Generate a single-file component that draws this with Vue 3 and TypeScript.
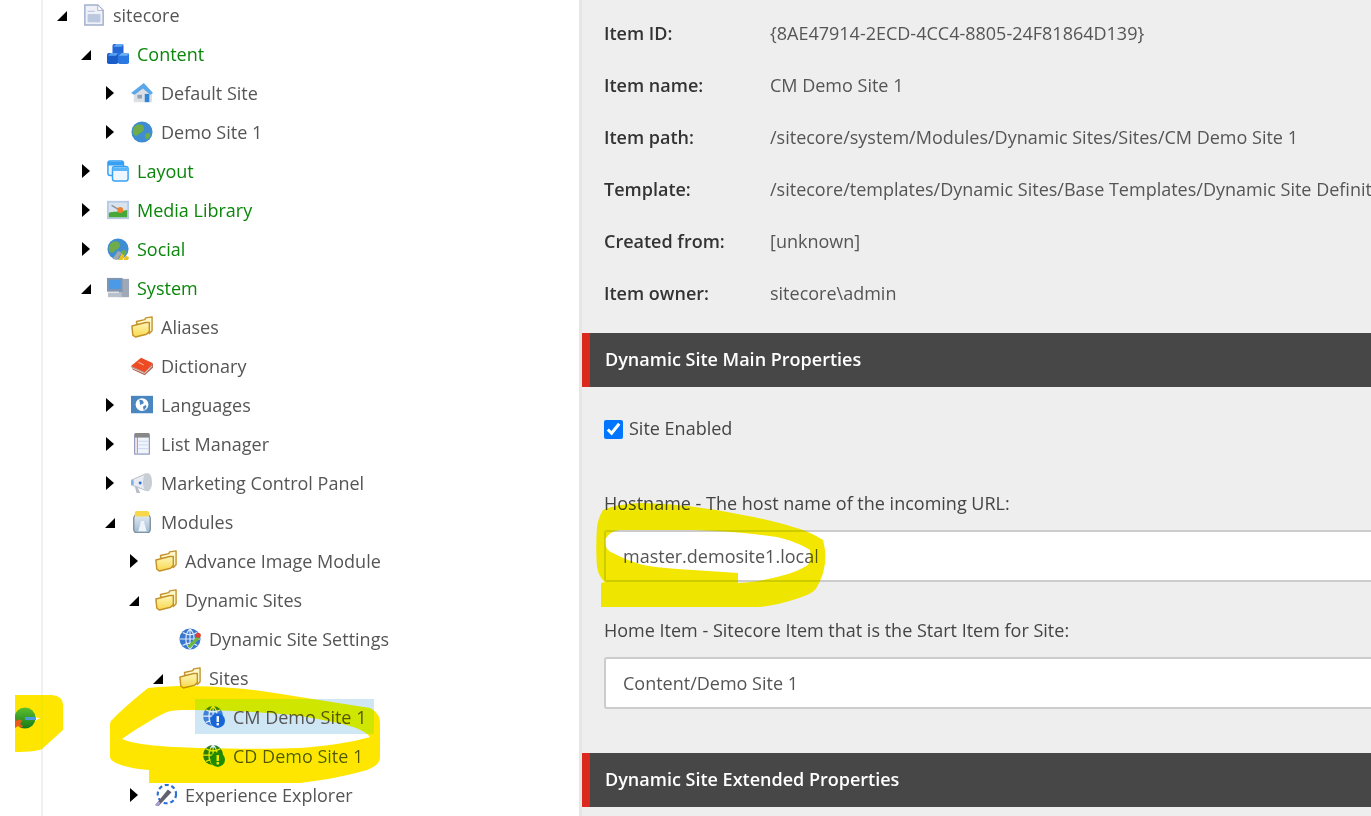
<script setup lang="ts">
interface Row { label: string; depth: number; arrow: '' | 'open' | 'closed'; icon: string; green?: boolean; selected?: boolean }
const rows: Row[] = [
  { label: 'sitecore', depth: 0, arrow: 'open', icon: 'page' },
  { label: 'Content', depth: 1, arrow: 'open', icon: 'cubes', green: true },
  { label: 'Default Site', depth: 2, arrow: 'closed', icon: 'home' },
  { label: 'Demo Site 1', depth: 2, arrow: 'closed', icon: 'globe' },
  { label: 'Layout', depth: 1, arrow: 'closed', icon: 'windows', green: true },
  { label: 'Media Library', depth: 1, arrow: 'closed', icon: 'picture', green: true },
  { label: 'Social', depth: 1, arrow: 'closed', icon: 'social', green: true },
  { label: 'System', depth: 1, arrow: 'open', icon: 'computer', green: true },
  { label: 'Aliases', depth: 2, arrow: '', icon: 'folder' },
  { label: 'Dictionary', depth: 2, arrow: '', icon: 'book' },
  { label: 'Languages', depth: 2, arrow: 'closed', icon: 'lang' },
  { label: 'List Manager', depth: 2, arrow: 'closed', icon: 'list' },
  { label: 'Marketing Control Panel', depth: 2, arrow: 'closed', icon: 'mega' },
  { label: 'Modules', depth: 2, arrow: 'open', icon: 'jar' },
  { label: 'Advance Image Module', depth: 3, arrow: 'closed', icon: 'folder' },
  { label: 'Dynamic Sites', depth: 3, arrow: 'open', icon: 'folder' },
  { label: 'Dynamic Site Settings', depth: 4, arrow: '', icon: 'settings' },
  { label: 'Sites', depth: 4, arrow: 'open', icon: 'folder' },
  { label: 'CM Demo Site 1', depth: 5, arrow: '', icon: 'siteBlue', selected: true },
  { label: 'CD Demo Site 1', depth: 5, arrow: '', icon: 'siteGreen' },
  { label: 'Experience Explorer', depth: 3, arrow: 'closed', icon: 'explorer' },
]
const info = [
  ['Item ID:', '{8AE47914-2ECD-4CC4-8805-24F81864D139}'],
  ['Item name:', 'CM Demo Site 1'],
  ['Item path:', '/sitecore/system/Modules/Dynamic Sites/Sites/CM Demo Site 1'],
  ['Template:', '/sitecore/templates/Dynamic Sites/Base Templates/Dynamic Site Definition'],
  ['Created from:', '[unknown]'],
  ['Item owner:', 'sitecore\\admin'],
]
</script>

<template>
  <div class="page">
    <svg class="defs" aria-hidden="true">
      <defs>
        <linearGradient id="fold" x1="0" y1="0" x2="0" y2="1">
          <stop offset="0" stop-color="#fff6b8"/>
          <stop offset="1" stop-color="#f8d84a"/>
        </linearGradient>
        <linearGradient id="pinGreen" x1="0" y1="0" x2="0" y2="1">
          <stop offset="0" stop-color="#5cc030"/>
          <stop offset="1" stop-color="#157a18"/>
        </linearGradient>
        <linearGradient id="jarGlass" x1="0" y1="0" x2="0" y2="1">
          <stop offset="0" stop-color="#e2ecf4"/>
          <stop offset="1" stop-color="#9db8d0"/>
        </linearGradient>
      </defs>
    </svg>
    <aside class="gutter"></aside>
    <section class="tree">
      <div class="rows">
        <div v-for="r in rows" :key="r.label" class="row" :class="'d' + r.depth">
          <span class="arrow" :class="r.arrow"></span>
          <span class="cell" :class="{ selected: r.selected }">
            <svg class="icon" viewBox="0 0 24 24">
              <template v-if="r.icon === 'page'">
                <path d="M2 1h14l6 6v16H2z" fill="#eef1f8" stroke="#a3b0cc" stroke-width="1.6"/>
                <path d="M16 1v6h6z" fill="#fff" stroke="#a3b0cc"/>
                <rect x="5" y="11" width="14" height="9" fill="#bcc8e0"/>
                <path d="M5 8h8" stroke="#c4cee2" stroke-width="1.4"/>
              </template>
              <template v-else-if="r.icon === 'cubes'">
                <rect x="6" y="1" width="12" height="12" rx="2" fill="#2468d8"/>
                <path d="M7 4l3-3h8l-2 3z" fill="#64a8f4"/>
                <rect x="0" y="11" width="12" height="12" rx="2" fill="#1a5cc8"/>
                <path d="M1 14l3-3h8l-2 3z" fill="#58a0f0"/>
                <rect x="12" y="11" width="12" height="12" rx="2" fill="#2a78e2"/>
                <path d="M13 14l3-3h8l-2 3z" fill="#6cb0f6"/>
              </template>
              <template v-else-if="r.icon === 'home'">
                <path d="M1 13L13 3l10 10v9H3v-8z" fill="#dcdfe3"/>
                <path d="M0 12L14 1l10 11-3 2-8-7-9 7z" fill="#5aa8ea"/>
                <rect x="15" y="13" width="5" height="9" fill="#2f86d8"/>
                <rect x="7" y="14" width="5" height="4" fill="#8ea2b8"/>
              </template>
              <template v-else-if="r.icon === 'globe' || r.icon === 'social'">
                <circle cx="12" cy="12" r="11.5" fill="#3e8cd2"/>
                <path d="M4 6c4-4 9-3 10 1s-3 5-5 7-4 3-6 1-1-7 1-9zM16 14c3-2 6-1 5 2s-4 5-5 3-1-4 0-5z" fill="#6dac48"/>
                <template v-if="r.icon === 'social'">
                  <path d="M6 23l6-9 4 2-5 8z" fill="#a0a8b0"/>
                  <path d="M12 24l4-7 3 2-2 5zM18 24l2-5 4 2-1 3z" fill="#e8c020"/>
                </template>
              </template>
              <template v-else-if="r.icon === 'windows'">
                <rect x="1" y="1" width="17" height="16" rx="2.5" fill="#e6f2fe" stroke="#36a0f4" stroke-width="1.6"/>
                <rect x="1" y="2" width="17" height="4" fill="#36a0f4"/>
                <rect x="6" y="7" width="17" height="16" rx="2.5" fill="#eef6ff" stroke="#36a0f4" stroke-width="1.6"/>
                <rect x="6" y="8" width="17" height="4" fill="#5ab6fa"/>
              </template>
              <template v-else-if="r.icon === 'picture'">
                <rect x="0" y="2" width="24" height="20" fill="#b6cae8"/>
                <rect x="2" y="4" width="20" height="16" fill="#d8e3ee"/>
                <path d="M2 20v-5c5-2 9 0 20-3v8z" fill="#46a836"/>
                <circle cx="14.5" cy="12" r="3.2" fill="#f08030"/>
                <path d="M5 7l7 4" stroke="#8a9098" stroke-width="1.4"/>
              </template>
              <template v-else-if="r.icon === 'computer'">
                <rect x="13" y="2" width="11" height="20" fill="#9fa8b6"/>
                <rect x="0" y="1" width="17" height="15" fill="#8494ae"/>
                <rect x="2" y="3" width="13" height="10" fill="#4a9ae8"/>
                <rect x="1" y="17" width="15" height="5" fill="#b8c0cc"/>
              </template>
              <template v-else-if="r.icon === 'folder'">
                <path d="M6 8V6l9-2 1-2 7-1v15l-3 3z" fill="#fff8c8" stroke="#c4922a" stroke-width="1.5" stroke-linejoin="round"/>
                <path d="M1 11l15-4 4 0v10l-3 3-12 3-3-2z" fill="url(#fold)" stroke="#c4922a" stroke-width="1.6" stroke-linejoin="round"/>
              </template>
              <template v-else-if="r.icon === 'book'">
                <path d="M0 12L11 3l13 6-9 10z" fill="#ee4a24"/>
                <path d="M0 12l15 7 9-10v5l-9 8-13-6z" fill="#b06a5c"/>
                <path d="M1 14l14 6 8-8" fill="none" stroke="#e4d4d0" stroke-width="1"/>
                <path d="M8 8l6 3" stroke="#f8a888" stroke-width="1.2"/>
              </template>
              <template v-else-if="r.icon === 'lang'">
                <rect x="-1" y="2" width="26" height="19" fill="#4a86c0"/>
                <circle cx="12" cy="11.5" r="7" fill="#fff"/>
                <path d="M9 6l4 1 1 3-4 2zM13 14l3-2 1 2-3 4z" fill="#4a86c0"/>
              </template>
              <template v-else-if="r.icon === 'list'">
                <rect x="4" y="2" width="16" height="21" fill="#f0f4fc" stroke="#8890b8" stroke-width="1.2"/>
                <path d="M7 4v18" stroke="#e89080" stroke-width="1.3"/>
                <rect x="4" y="0" width="16" height="5" fill="#888"/>
                <path d="M8 9h11M8 13h11M8 17h11" stroke="#c8d4ec"/>
              </template>
              <template v-else-if="r.icon === 'mega'">
                <path d="M0 9l16-7v18L0 14z" fill="#e8ecf2" stroke="#b0b8c4"/>
                <ellipse cx="18" cy="11" rx="5" ry="10" fill="#c8ced6"/>
                <circle cx="10" cy="12" r="1.6" fill="#2870d0"/>
                <path d="M0 9h3v5H0z" fill="#7ab4e8"/>
                <path d="M4 15l2 8h4l-3-7z" fill="#b8bec8"/>
              </template>
              <template v-else-if="r.icon === 'jar'">
                <rect x="3" y="4" width="18" height="20" rx="4" fill="url(#jarGlass)" stroke="#7a8a98" stroke-width="1.4"/>
                <rect x="4" y="0" width="16" height="6" rx="2.5" fill="#f8d84a"/>
                <path d="M8 22l3-11h3l3 11z" fill="#eef4fa"/>
              </template>
              <template v-else-if="r.icon === 'settings'">
                <circle cx="12" cy="12" r="11.5" fill="#3a78d0"/>
                <path d="M1 12h22M12 1v22M4 5c5 3 11 3 16 0M4 19c5-3 11-3 16 0M12 1c-6 6-6 16 0 22M12 1c6 6 6 16 0 22" stroke="#dbe8f8" fill="none" stroke-width="1.3"/>
                <path d="M9 20l11-11 3 2-11 11z" fill="#6ab840"/>
                <circle cx="21" cy="8" r="2.8" fill="#e04030"/>
              </template>
              <template v-else-if="r.icon === 'siteBlue' || r.icon === 'siteGreen'">
                <circle cx="11" cy="11" r="11" :fill="r.icon === 'siteBlue' ? '#3f82d8' : '#2e7d32'"/>
                <path d="M0 11h22M11 0v22M3 4c5 3 11 3 16 0M3 18c5-3 11-3 16 0M11 0c-6 6-6 16 0 22M11 0c6 6 6 16 0 22" stroke="#e6effa" fill="none" stroke-width="1.3"/>
                <circle cx="16" cy="16" r="8" :fill="r.icon === 'siteBlue' ? '#1766d8' : '#1f8a1a'"/>
                <rect x="14.8" y="11" width="2.6" height="6.5" fill="#fff"/>
                <rect x="14.8" y="18.6" width="2.6" height="2.6" fill="#fff"/>
              </template>
              <template v-else-if="r.icon === 'explorer'">
                <circle cx="13" cy="11" r="10" fill="none" stroke="#2f6fd8" stroke-width="2.4" stroke-dasharray="4.4 3"/>
                <path d="M1 22l3 2 14-15-4-3z" fill="#62626e"/>
                <path d="M1 24l4-4" stroke="#a8a0d0" stroke-width="3.2"/>
              </template>
            </svg>
            <span class="label" :class="{ green: r.green }">{{ r.label }}</span>
          </span>
        </div>
      </div>
    </section>
    <main class="details">
      <dl class="info">
        <div v-for="i in info" :key="i[0]" class="info-row">
          <dt>{{ i[0] }}</dt>
          <dd>{{ i[1] }}</dd>
        </div>
      </dl>
      <h2 class="section">Dynamic Site Main Properties</h2>
      <div class="fields">
        <label class="check"><input type="checkbox" checked /><span>Site Enabled</span></label>
        <div class="field first">
          <div class="field-label">Hostname - The host name of the incoming URL:</div>
          <div class="input">master.demosite1.local</div>
        </div>
        <div class="field second">
          <div class="field-label">Home Item - Sitecore Item that is the Start Item for Site:</div>
          <div class="input">Content/Demo Site 1</div>
        </div>
      </div>
      <h2 class="section">Dynamic Site Extended Properties</h2>
    </main>
    <svg class="scribbles" viewBox="0 0 1371 816" aria-hidden="true">
      <path fill="#ffe600" fill-rule="evenodd" d="M15 695H52Q63 696 63 705V730L42 749Q36 752 15 752ZM33 717L40 718L33 722Z"/>
      <path fill="#ffe600" fill-rule="evenodd" d="M148 688C180 685 205 686 233 688C260 690 280 694 300 697L370 708C377 712 380 716 380 723V757C380 763 375 767 367 770C345 776 325 780 300 783H149V770C135 769 122 766 116 763C112 761 110 759 110 757V725C110 722 111 720 112 720C122 709 135 699 148 688ZM122 739C135 745 165 747 200 748C240 749 270 749 300 748C325 746 350 743 370 737C365 730 350 725 333 722C310 717 290 714 267 713C240 711 215 710 193 710C182 710 174 710 167 712C150 720 135 730 122 739Z"/>
      <path fill="#f3e600" fill-rule="evenodd" d="M603 510C615 505 630 503 643 503C675 504 700 507 727 512C750 516 775 521 793 527C805 530 815 535 823 540C825 548 826 555 825 563C824 572 821 580 817 587C815 591 811 593 807 595C790 602 775 605 760 607H601V583L605 582C600 578 598 572 597 567C596 555 596 540 597 527C598 520 600 515 603 510ZM605 540C605 548 608 551 613 553C622 558 632 562 643 565C660 568 677 569 693 570L738 573V583C755 582 765 580 777 577C790 574 800 570 808 565C810 561 811 555 810 550C800 544 790 540 777 537C750 533 720 531 693 530H620C612 531 607 535 605 540Z"/>
    </svg>
    <svg class="pin" viewBox="0 0 26 26" aria-hidden="true">
      <circle cx="10" cy="13" r="10.5" fill="url(#pinGreen)"/>
      <rect x="10" y="12" width="11" height="3" fill="#4a9ae0"/>
      <path d="M0 14l2 2 2-2 3 2-2 3 3 2-2 2-3-2-3 2-2-2 2-3-2-2z" fill="#ec5a18"/>
    </svg>
  </div>
</template>

<style>
html, body { margin: 0; background: #fff; overflow: hidden; }
</style>

<style scoped>
.page {
  position: relative;
  width: 1371px;
  height: 816px;
  overflow: hidden;
  display: flex;
  font-family: "Open Sans", "Noto Sans", sans-serif;
  background: #fff;
}
.defs { position: absolute; width: 0; height: 0; }
.gutter {
  width: 41px;
  flex: none;
  border-right: 2px solid #f0f0f0;
}
.tree {
  width: 536px;
  flex: none;
  border-right: 3px solid #e6e6e6;
  overflow: hidden;
}
.rows { margin-top: -5px; }
.row {
  height: 39px;
  display: flex;
  align-items: center;
  font-size: 18px;
}
.d0 { padding-left: 15px; }
.d1 { padding-left: 39px; }
.d2 { padding-left: 63px; }
.d3 { padding-left: 87px; }
.d4 { padding-left: 111px; }
.d5 { padding-left: 135px; }
.arrow {
  width: 18px;
  height: 14px;
  flex: none;
  margin-right: 7px;
  position: relative;
}
.arrow.closed::before {
  content: "";
  position: absolute;
  left: 0;
  top: 0;
  border-left: 8px solid #000;
  border-top: 7px solid transparent;
  border-bottom: 7px solid transparent;
}
.arrow.open::before {
  content: "";
  position: absolute;
  left: -1px;
  bottom: 1px;
  border-right: 10px solid #000;
  border-top: 10px solid transparent;
}
.cell {
  display: flex;
  align-items: center;
  height: 35px;
  gap: 8px;
  padding-right: 8px;
}
.cell.selected {
  background: #cfe6f4;
  margin-left: -8px;
  padding-left: 8px;
}
.icon { width: 22px; height: 22px; flex: none; filter: blur(0.3px); }
.label { color: #555; white-space: nowrap; }
.label.green { color: #0a870a; }
.details {
  flex: 1;
  min-width: 0;
  background: #eee;
  color: #333;
  font-size: 18px;
  overflow: hidden;
}
.info { margin: 0; padding: 7px 0 0 22px; height: 333px; box-sizing: border-box; }
.info-row { display: flex; height: 52px; align-items: center; white-space: nowrap; }
dt { width: 166px; flex: none; font-weight: 600; color: #333; }
dd { margin: 0; color: #555; }
.section {
  margin: 0;
  height: 54px;
  line-height: 52px;
  padding-left: 15px;
  background: #474747;
  border-left: 8px solid #dc291e;
  color: #fff;
  font-size: 18px;
  font-weight: 600;
}
.fields { padding: 0 0 0 22px; height: 366px; box-sizing: border-box; }
.check { display: flex; align-items: center; gap: 6px; padding-top: 28px; height: 25px; color: #444; box-sizing: content-box; }
.check input { width: 19px; height: 19px; margin: 4px 0 0; accent-color: #0075ff; }
.field-label { color: #444; line-height: 26px; white-space: nowrap; }
.field.first { margin-top: 50px; }
.field.second { margin-top: 35px; }
.input {
  margin-top: 14px;
  height: 52px;
  box-sizing: border-box;
  background: #fff;
  border: 2px solid #ccc;
  border-radius: 3px;
  padding-left: 17px;
  line-height: 48px;
  color: #555;
  width: 900px;
}
.scribbles {
  position: absolute;
  inset: 0;
  width: 1371px;
  height: 816px;
  mix-blend-mode: darken;
  pointer-events: none;
}
.pin {
  position: absolute;
  left: 15px;
  top: 705px;
  width: 26px;
  height: 26px;
  filter: blur(0.3px);
}
</style>
